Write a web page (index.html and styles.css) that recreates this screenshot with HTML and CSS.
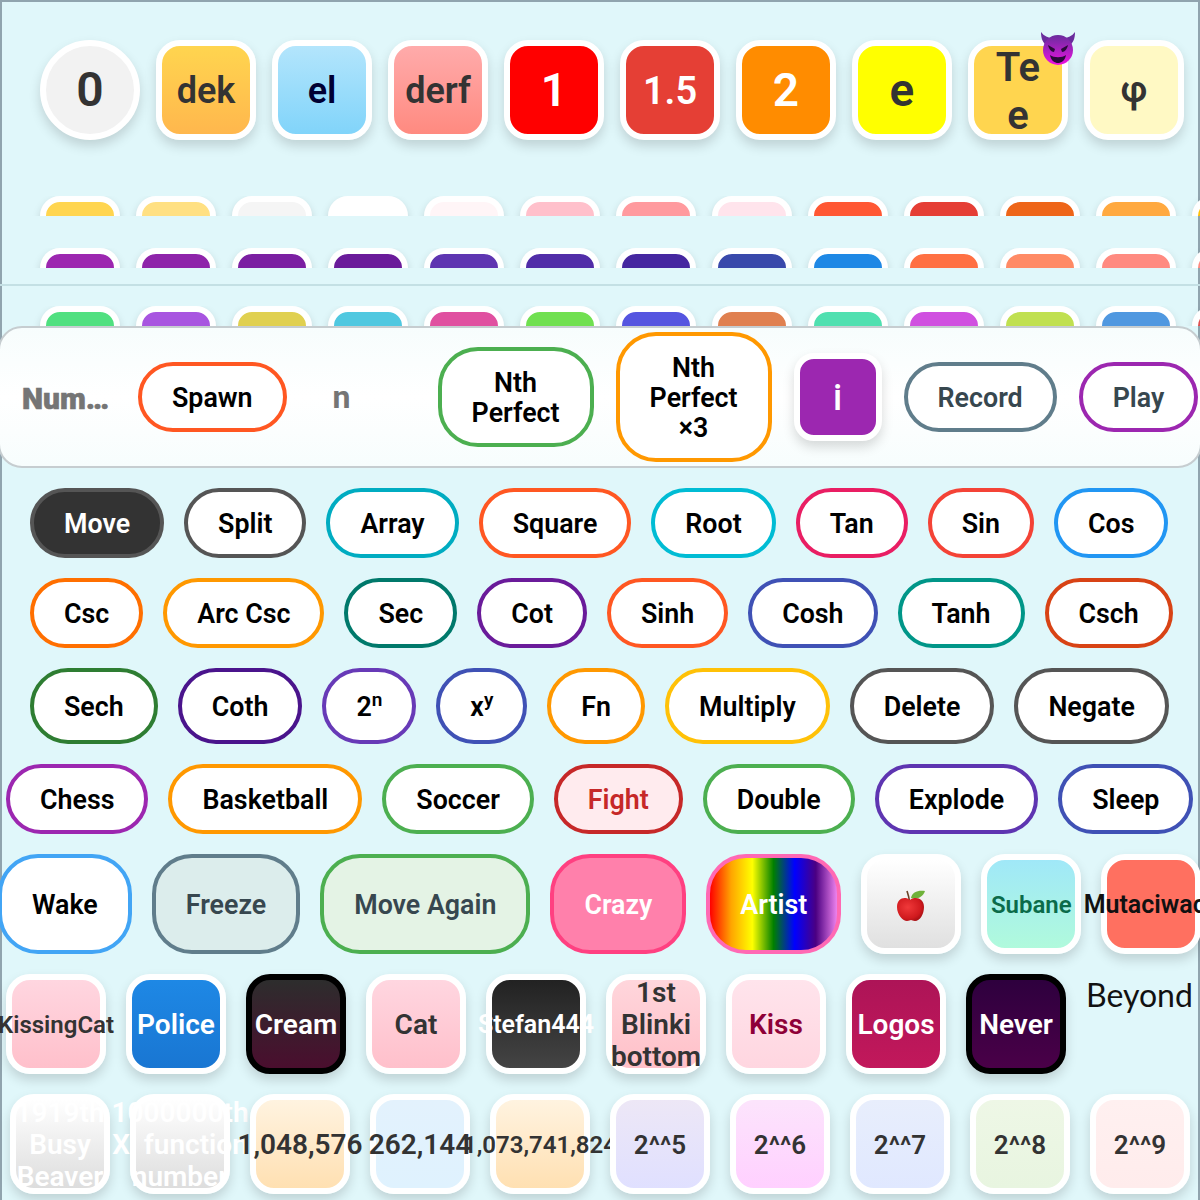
FILE: index.html
```html
<!DOCTYPE html>
<html lang="en">
<head>
    <meta charset="UTF-8">
    <meta name="viewport" content="width=device-width, initial-scale=1.0">
    <title>Number Game</title>
    <link rel="stylesheet" href="styles.css">
</head>
<body>
<div class="page">
    <!-- top shop row -->
    <div class="top-row">
        <div class="tile tile-top round">0</div>
        <div class="tile tile-top t-dek">dek</div>
        <div class="tile tile-top t-el">el</div>
        <div class="tile tile-top t-derf">derf</div>
        <div class="tile tile-top t-one">1</div>
        <div class="tile tile-top t-onehalf">1.5</div>
        <div class="tile tile-top t-two">2</div>
        <div class="tile tile-top t-e">e</div>
        <div class="tile tile-top t-tee">Te<br>e
            <svg class="devil" viewBox="0 0 36 36">
                <defs>
                    <linearGradient id="devilFace" x1="0" y1="0" x2="0" y2="1">
                        <stop offset="0" stop-color="#6a2c9c"/>
                        <stop offset="0.55" stop-color="#b01fc4"/>
                        <stop offset="1" stop-color="#f010e0"/>
                    </linearGradient>
                </defs>
                <path d="M1 1 C1 8 3 12 7 15 L13 7 C8 7 4 5 1 1Z" fill="#6a2c9c"/>
                <path d="M35 1 C35 8 33 12 29 15 L23 7 C28 7 32 5 35 1Z" fill="#6a2c9c"/>
                <circle cx="18" cy="19" r="15" fill="url(#devilFace)"/>
                <path d="M8 14 L15 18 L14 21 C11 21 9 18 8 14Z" fill="#2a0a3a"/>
                <path d="M28 14 L21 18 L22 21 C25 21 27 18 28 14Z" fill="#2a0a3a"/>
                <path d="M10 24 C14 27 22 27 26 24 C25 30 21 32 18 32 C15 32 11 30 10 24Z" fill="#2a0a3a"/>
            </svg>
        </div>
        <div class="tile tile-top t-phi">φ</div>
    </div>

    <div class="swatch-row row-a">
        <span></span><span></span><span></span><span></span><span></span><span></span><span></span><span></span><span></span><span></span><span></span><span></span><span></span>
    </div>
    <div class="swatch-row row-b">
        <span></span><span></span><span></span><span></span><span></span><span></span><span></span><span></span><span></span><span></span><span></span><span></span><span></span>
    </div>
    <div class="rule"></div>
    <div class="swatch-row row-c">
        <span></span><span></span><span></span><span></span><span></span><span></span><span></span><span></span><span></span><span></span><span></span><span></span><span></span>
    </div>

    <!-- control panel -->
    <div class="panel">
        <div class="panel-title">Num…</div>
        <button class="pill b-deeporange">Spawn</button>
        <div class="panel-n">n</div>
        <button class="pill pill-block b-green">Nth<br>Perfect</button>
        <button class="pill pill-block b-orange">Nth<br>Perfect<br>×3</button>
        <div class="tile tile-info">i</div>
        <button class="pill b-slate soft">Record</button>
        <button class="pill b-purple soft">Play</button>
    </div>

    <div class="pill-row first">
        <button class="pill b-grey dark">Move</button>
        <button class="pill b-grey">Split</button>
        <button class="pill b-teal">Array</button>
        <button class="pill b-deeporange">Square</button>
        <button class="pill b-cyan">Root</button>
        <button class="pill b-pink">Tan</button>
        <button class="pill b-red">Sin</button>
        <button class="pill b-blue">Cos</button>
    </div>
    <div class="pill-row">
        <button class="pill b-amber">Csc</button>
        <button class="pill b-orange">Arc Csc</button>
        <button class="pill b-darkteal">Sec</button>
        <button class="pill b-darkpurple">Cot</button>
        <button class="pill b-deeporange">Sinh</button>
        <button class="pill b-indigo">Cosh</button>
        <button class="pill b-teal2">Tanh</button>
        <button class="pill b-rust">Csch</button>
    </div>
    <div class="pill-row tall">
        <button class="pill b-darkgreen">Sech</button>
        <button class="pill b-deeppurple">Coth</button>
        <button class="pill b-violet">2<sup>n</sup></button>
        <button class="pill b-indigo">x<sup>y</sup></button>
        <button class="pill b-orange">Fn</button>
        <button class="pill b-yellow">Multiply</button>
        <button class="pill b-grey">Delete</button>
        <button class="pill b-grey">Negate</button>
    </div>
    <div class="pill-row wide">
        <button class="pill b-purple">Chess</button>
        <button class="pill b-orange">Basketball</button>
        <button class="pill b-green">Soccer</button>
        <button class="pill b-crimson fight">Fight</button>
        <button class="pill b-green">Double</button>
        <button class="pill b-violet2">Explode</button>
        <button class="pill b-indigo">Sleep</button>
    </div>

    <!-- status effects and skins -->
    <div class="mixed-row">
        <button class="pill big b-sky">Wake</button>
        <button class="pill big b-slate freeze">Freeze</button>
        <button class="pill big b-green again">Move Again</button>
        <button class="pill big crazy">Crazy</button>
        <button class="pill big artist">Artist</button>
        <div class="tile t-apple">
            <svg class="apple" viewBox="0 0 30 34">
                <defs>
                    <radialGradient id="appleBody" cx="0.4" cy="0.4" r="0.7">
                        <stop offset="0" stop-color="#f0393a"/>
                        <stop offset="0.7" stop-color="#d01a1e"/>
                        <stop offset="1" stop-color="#9c0d12"/>
                    </radialGradient>
                </defs>
                <path d="M11 3 C12 6 13 9 13.5 13" stroke="#6b4226" stroke-width="1.6" fill="none"/>
                <path d="M15 10 C16 4 22 2 29 3 C27 9 21 12 15 10Z" fill="#6fb23a"/>
                <path d="M14 12 C9 8 1 10 1 19 C1 27 7 33 11 33 C13 33 14 32 15 32 C16 32 17 33 19 33 C24 33 28 26 28 19 C28 10 19 8 14 12Z" fill="url(#appleBody)"/>
            </svg>
        </div>
        <div class="tile t-subane">Subane</div>
        <div class="tile t-muta">Mutaciwack</div>
    </div>
    <div class="tile-row">
        <div class="tile t-pink t-kissing">KissingCat</div>
        <div class="tile t-police">Police</div>
        <div class="tile t-cream">Cream</div>
        <div class="tile t-pink">Cat</div>
        <div class="tile t-stefan">Stefan444</div>
        <div class="tile t-blinki">1st<br>Blinki<br>bottom</div>
        <div class="tile t-kiss">Kiss</div>
        <div class="tile t-logos">Logos</div>
        <div class="tile t-never">Never</div>
        <div class="beyond">Beyond</div>
    </div>
    <div class="tile-row last">
        <div class="tile t-ghost">1919th<br>Busy<br>Beaver</div>
        <div class="tile t-ghost">1000000th<br>X&nbsp; function<br>number</div>
        <div class="tile t-peach">1,048,576</div>
        <div class="tile t-ice">262,144</div>
        <div class="tile t-peach2">1,073,741,824</div>
        <div class="tile tiny t-lav">2^^5</div>
        <div class="tile tiny t-orchid">2^^6</div>
        <div class="tile tiny t-periwinkle">2^^7</div>
        <div class="tile tiny t-mint">2^^8</div>
        <div class="tile tiny t-rose">2^^9</div>
    </div>
</div>
</body>
</html>
```

FILE: styles.css
```css
* {
    margin: 0;
    padding: 0;
    box-sizing: border-box;
    font-family: 'Roboto', 'Liberation Sans', sans-serif;
}

body {
    background: #e0f7fa;
}

.page {
    position: relative;
    width: 1200px;
    height: 1200px;
    overflow: hidden;
    background: #e0f7fa;
    box-shadow: inset 2px 2px 0 #90a4ae, inset -2px 0 0 #90a4ae;
}

/* tiles */
.tile {
    position: relative;
    isolation: isolate;
    flex: none;
    display: flex;
    align-items: center;
    justify-content: center;
    width: 100px;
    height: 100px;
    padding-top: 2px;
    border: 6px solid #fff;
    border-radius: 24px;
    box-shadow: 0 6px 12px rgba(0, 0, 0, 0.15);
    color: #333;
    font-size: 28px;
    font-weight: 600;
    line-height: 32px;
    text-align: center;
    white-space: nowrap;
}

.top-row {
    display: flex;
    gap: 16px;
    padding: 40px 0 0 40px;
}

.tile-top {
    padding-top: 0;
    font-size: 36px;
    line-height: 48px;
}

.round {
    border-radius: 50%;
    background: #f2f2f2;
    font-size: 48px;
}

.t-dek { background: linear-gradient(#ffd54f, #ffb74d); padding-top: 2px; }
.t-el { background: linear-gradient(#b3e5fc, #81d4fa); color: #000033; padding-top: 2px; }
.t-derf { background: linear-gradient(#ffabab, #ff8a80); padding-top: 2px; }
.t-one { background: #ff0000; color: #fff; font-size: 46px; }
.t-onehalf { background: #e53f35; color: #fff; font-size: 38px; padding-top: 2px; }
.t-two { background: #ff8c00; color: #fff; font-size: 46px; }
.t-e { background: #ffff00; font-size: 46px; }
.t-tee { background: #ffd54f; font-size: 40px; padding-top: 4px; }
.t-phi { background: #fff9c4; }

.devil {
    position: absolute;
    top: -15px;
    left: 66px;
    width: 36px;
    height: 36px;
}

/* cut off rows of the shop */
.swatch-row {
    display: flex;
    gap: 16px;
    height: 20px;
    overflow: hidden;
    padding-left: 40px;
}

.swatch-row span {
    flex: none;
    width: 80px;
    height: 80px;
    border: 6px solid #fff;
    border-radius: 20px;
    box-shadow: 0 4px 8px rgba(0, 0, 0, 0.15);
}

.row-a { margin-top: 56px; }
.row-b { margin-top: 32px; }
.row-c { margin-top: 20px; }

.row-a span:nth-child(1) { background: #ffd54f; }
.row-a span:nth-child(2) { background: #ffe082; }
.row-a span:nth-child(3) { background: #f5f5f5; }
.row-a span:nth-child(4) { background: #ffffff; }
.row-a span:nth-child(5) { background: #fff5f7; }
.row-a span:nth-child(6) { background: #ffc0cb; }
.row-a span:nth-child(7) { background: #ff9a9e; }
.row-a span:nth-child(8) { background: #ffe4ec; }
.row-a span:nth-child(9) { background: #ff5733; }
.row-a span:nth-child(10) { background: #e53e35; }
.row-a span:nth-child(11) { background: #ee6518; }
.row-a span:nth-child(12) { background: #ffa940; }
.row-a span:nth-child(13) { background: #ffc107; }

.row-b span:nth-child(1) { background: #9c27b0; }
.row-b span:nth-child(2) { background: #8e24aa; }
.row-b span:nth-child(3) { background: #7b1fa2; }
.row-b span:nth-child(4) { background: #6a1b9a; }
.row-b span:nth-child(5) { background: #5e35b1; }
.row-b span:nth-child(6) { background: #512da8; }
.row-b span:nth-child(7) { background: #4527a0; }
.row-b span:nth-child(8) { background: #3949ab; }
.row-b span:nth-child(9) { background: #1e88e5; }
.row-b span:nth-child(10) { background: #ff7043; }
.row-b span:nth-child(11) { background: #ff8a65; }
.row-b span:nth-child(12) { background: #ff8a80; }
.row-b span:nth-child(13) { background: #ff8a80; }

.row-c span:nth-child(1) { background: #50e080; }
.row-c span:nth-child(2) { background: #a855e0; }
.row-c span:nth-child(3) { background: #e0d050; }
.row-c span:nth-child(4) { background: #50c8e0; }
.row-c span:nth-child(5) { background: #e050a0; }
.row-c span:nth-child(6) { background: #70e050; }
.row-c span:nth-child(7) { background: #5555e0; }
.row-c span:nth-child(8) { background: #e08050; }
.row-c span:nth-child(9) { background: #50e0b0; }
.row-c span:nth-child(10) { background: #d050e0; }
.row-c span:nth-child(11) { background: #c0e050; }
.row-c span:nth-child(12) { background: #5098e0; }
.row-c span:nth-child(13) { background: #e05050; }

.rule {
    height: 2px;
    margin-top: 16px;
    background: #c4e0e4;
}

/* panel */
.panel {
    display: flex;
    align-items: center;
    gap: 22px;
    height: 142px;
    margin: 0 -2px;
    padding-left: 24px;
    background: linear-gradient(#f7fdfd, #ffffff 50%, #f7fdfd);
    border: 2px solid #c6cdd0;
    border-radius: 24px;
}

.panel-title {
    width: 94px;
    margin-left: -2px;
    padding-top: 3px;
    color: #757575;
    font-size: 30px;
    font-weight: 900;
    -webkit-text-stroke: 0.6px #757575;
}

.panel-n {
    width: 107px;
    padding-left: 24px;
    color: #757575;
    font-size: 32px;
    font-weight: 700;
}

.tile-info {
    width: 88px;
    height: 88px;
    border-radius: 20px;
    background: #9c27b0;
    color: #fff;
    font-size: 36px;
    font-weight: 500;
}

/* pills */
.pill {
    flex: none;
    padding: 17px 30px 15px;
    background: #fff;
    border: 4px solid #555;
    border-radius: 35px;
    color: #000;
    font-size: 26.8px;
    font-weight: 600;
    line-height: 30px;
    white-space: nowrap;
}

.pill-block {
    width: 156px;
    padding: 17px 0 15px;
    border-radius: 40px;
}

.pill sup {
    font-size: 19px;
    line-height: 0;
}

.soft { color: #37474f; }
.dark { background: #333; color: #fff; }

.b-deeporange { border-color: #ff5722; }
.b-green { border-color: #4caf50; }
.b-orange { border-color: #ff9800; }
.b-slate { border-color: #607d8b; }
.b-purple { border-color: #9c27b0; }
.b-grey { border-color: #555; }
.b-teal { border-color: #00acc1; }
.b-cyan { border-color: #00bcd4; }
.b-pink { border-color: #e91e63; }
.b-red { border-color: #f44336; }
.b-blue { border-color: #2196f3; }
.b-amber { border-color: #ff6f00; }
.b-darkteal { border-color: #00796b; }
.b-darkpurple { border-color: #6a1b9a; }
.b-indigo { border-color: #3f51b5; }
.b-teal2 { border-color: #009688; }
.b-rust { border-color: #d84315; }
.b-darkgreen { border-color: #2e7d32; }
.b-deeppurple { border-color: #4a148c; }
.b-violet { border-color: #673ab7; }
.b-violet2 { border-color: #5e35b1; }
.b-yellow { border-color: #ffc107; }
.b-crimson { border-color: #c62828; }
.b-sky { border-color: #42a5f5; }

.pill-row {
    display: flex;
    gap: 20px;
    margin-top: 20px;
    padding-left: 30px;
}

.pill-row.tall .pill {
    padding-top: 20px;
    padding-bottom: 18px;
    border-radius: 38px;
}

.pill-row.wide { padding-left: 6px; }

.fight {
    background: #ffebee;
    color: #c62828;
}

.mixed-row {
    display: flex;
    gap: 20px;
    margin: 20px 0 0 -2px;
}

.pill.big {
    padding: 32px 30px 30px;
    border-radius: 40px;
}

.freeze { background: #dcedec; color: #37474f; }
.again { background: #e4f3e5; color: #37474f; }

.crazy {
    background: #ff80ab;
    border-color: #ff4081;
    color: #fff;
}

.artist {
    background: linear-gradient(90deg, #ff0000, #ffa500, #ffff00, #008000, #0000ff, #4b0082, #ee82ee);
    border-color: #ff69b4;
    color: #fff;
}

.t-apple { background: linear-gradient(#ffffff, #e0e0e0); }
.apple { width: 30px; height: 34px; }

.t-subane {
    background: linear-gradient(#a0e8f8, #b0fadc);
    color: #0b6b4a;
    font-size: 24px;
}

.t-muta {
    background: #ff7060;
    color: #111;
    font-size: 25px;
}

.tile-row {
    display: flex;
    gap: 20px;
    margin-top: 20px;
    padding-left: 6px;
}

.tile-row.last { padding-left: 10px; }

.t-pink { background: linear-gradient(#ffd6e0, #ffc0cb); }
.t-kissing { font-size: 24px; }
.t-police { background: linear-gradient(#1e88e5, #1976d2); color: #fff; }
.t-cream { background: linear-gradient(#2d2d2d, #4a0e2e); border-color: #000; color: #fff; }
.t-stefan { background: linear-gradient(#222, #444); color: #fff; font-size: 25px; }
.t-blinki { background: linear-gradient(#ffd6dc, #ffc0c8); }
.t-kiss { background: linear-gradient(#ffe4ec, #ffd6e0); color: #8e0038; }
.t-logos { background: linear-gradient(#ad1457, #c2185b); color: #fff; }
.t-never { background: linear-gradient(#2e003e, #4a0048); border-color: #000; color: #fff; }

.beyond {
    flex: none;
    margin-top: 1px;
    color: #111;
    font-family: 'Lato', sans-serif;
    font-size: 32px;
    line-height: 40px;
}

.t-ghost { background: linear-gradient(#ffffff, #dddddd); color: #fff; }
.t-peach { background: linear-gradient(#fff3e0, #ffe0b2); }
.t-ice { background: linear-gradient(#e3f2fd, #dff2fe); }
.t-peach2 { background: linear-gradient(#fff3e0, #ffe0b2); font-size: 24px; }
.t-lav { background: linear-gradient(#ede7f6, #e0e0ff); }
.t-orchid { background: linear-gradient(#fce4fc, #ffd0ff); }
.t-periwinkle { background: linear-gradient(#e8eefc, #e0e8ff); }
.t-mint { background: linear-gradient(#eef7e6, #e8f5e0); }
.t-rose { background: linear-gradient(#fff0f0, #ffecec); }

.tiny { font-size: 26px; }
```
